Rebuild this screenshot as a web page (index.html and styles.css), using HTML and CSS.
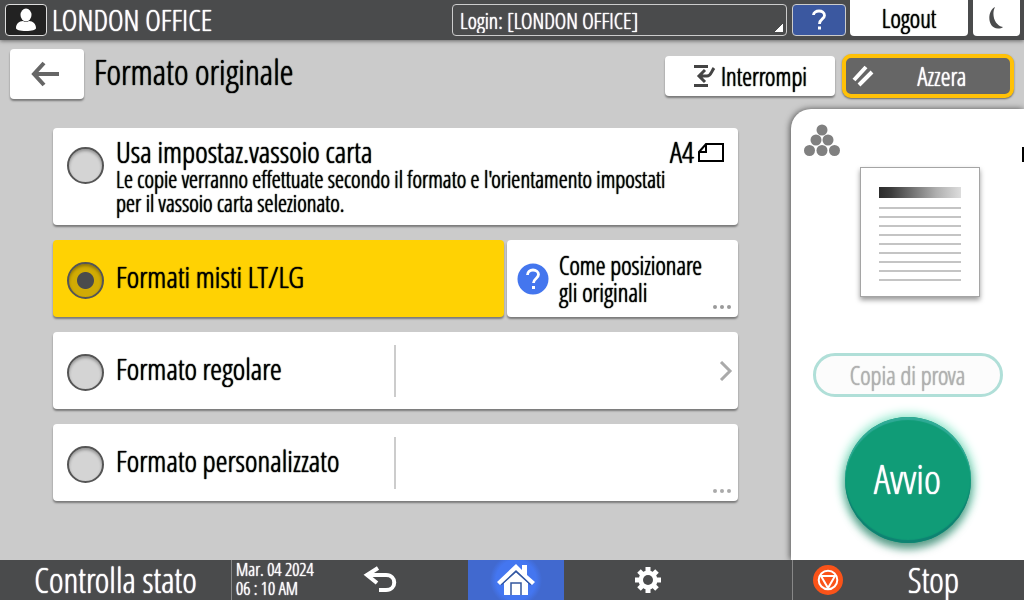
FILE: index.html
```html
<!DOCTYPE html>
<html lang="it">
<head>
    <meta charset="UTF-8">
    <meta name="viewport" content="width=device-width, initial-scale=1.0">
    <title>Formato originale</title>
    <link rel="stylesheet" href="styles.css">
</head>
<body>
    <header class="topbar">
        <div class="user">
            <span class="user-icon">
                <svg width="22" height="24" viewBox="0 0 22 24"><ellipse cx="11" cy="7" rx="5.500" ry="6.500" fill="#fff"/><path d="M1 20c0-4 3-7 7-7 2 1.300 4 1.300 6 0 4 0 7 3 7 7 0 2-4 3-10 3S1 22 1 20z" fill="#fff"/></svg>
            </span>
            <span class="user-name">LONDON OFFICE</span>
        </div>
        <select class="login" aria-label="Login">
            <option>Login: [LONDON OFFICE]</option>
        </select>
        <button class="help" aria-label="?">
            <svg width="16" height="22" viewBox="0 0 16 22"><path d="M2.500 6C2.500 3.500 5 2 8 2s5.500 1.500 5.500 4.500C13.500 10 8.500 10 8.500 15" fill="none" stroke="#fff" stroke-width="2.800"/><rect x="7" y="17.500" width="3" height="3" fill="#fff"/></svg>
        </button>
        <button class="logout">Logout</button>
        <button class="sleep" aria-label="Sleep">
            <svg width="18" height="24" viewBox="0 0 18 24"><path d="M7 1C-1 5-1 22 10 22.500c2 0 4-.5 5-1.500C7 20 3 9 7 1z" fill="#4a4b4c"/></svg>
        </button>
    </header>

    <div class="titlebar">
        <button class="back" aria-label="Indietro">
            <svg width="34" height="26" viewBox="0 0 34 26"><path d="M14 2L4 13l10 11M3 13h26" fill="none" stroke="#666" stroke-width="4"/></svg>
        </button>
        <h1>Formato originale</h1>
        <div class="actions">
            <button class="interrupt">
                <svg width="24" height="24" viewBox="0 0 24 24"><path d="M1 2.500h14M1 21.500h14M7 12h7c4 0 4-4 7-8M12 6l-6 6 6 6" fill="none" stroke="#444" stroke-width="3"/></svg>
                Interrompi
            </button>
            <button class="reset">
                <svg width="22" height="22" viewBox="0 0 22 22"><path d="M2 15L14 2M7 20L20 7" stroke="#fff" stroke-width="4"/></svg>
                <span>Azzera</span>
            </button>
        </div>
    </div>

    <div class="content">
        <main class="options">
            <label class="card card-tall">
                <input type="radio" name="format">
                <span class="text">
                    <span class="name">Usa impostaz.vassoio carta</span>
                    <span class="desc">Le copie verranno effettuate secondo il formato e l'orientamento impostati<br>per il vassoio carta selezionato.</span>
                </span>
                <span class="paper">A4
                    <svg width="26" height="19" viewBox="0 0 26 19"><path d="M8 1h17v17H1V9zM8 1v8H1" fill="none" stroke="#000" stroke-width="2"/></svg>
                </span>
            </label>
            <div class="split">
                <label class="card selected">
                    <input type="radio" name="format" checked>
                    <span class="name">Formati misti LT/LG</span>
                </label>
                <button class="card info">
                    <svg class="info-icon" width="32" height="32" viewBox="0 0 32 32"><circle cx="16" cy="16" r="15.500" fill="#4476ee"/><path d="M10.500 12c0-3 2.500-5 5.500-5s5.500 2 5.500 4.500c0 4-5 4-5 8.500" fill="none" stroke="#fff" stroke-width="2.800"/><rect x="15" y="23" width="3" height="3" fill="#fff"/></svg>
                    <span>Come posizionare<br>gli originali</span>
                    <svg class="more" width="18" height="4" viewBox="0 0 18 4" fill="#9a9a9a"><circle cx="2" cy="2" r="2"/><circle cx="9" cy="2" r="2"/><circle cx="16" cy="2" r="2"/></svg>
                </button>
            </div>
            <label class="card">
                <input type="radio" name="format">
                <span class="name name-col">Formato regolare</span>
                <svg class="chevron" width="14" height="20" viewBox="0 0 14 20"><path d="M2 1l9 9-9 9" fill="none" stroke="#aaa" stroke-width="3"/></svg>
            </label>
            <label class="card">
                <input type="radio" name="format">
                <span class="name name-col">Formato personalizzato</span>
                <svg class="more" width="18" height="4" viewBox="0 0 18 4" fill="#aaa"><circle cx="2" cy="2" r="2"/><circle cx="9" cy="2" r="2"/><circle cx="16" cy="2" r="2"/></svg>
            </label>
        </main>

        <aside class="panel">
            <div class="panel-top">
                <svg width="36" height="34" viewBox="0 0 36 34" fill="#808080"><circle cx="18" cy="6" r="5.500"/><circle cx="12" cy="16" r="5.500"/><circle cx="24" cy="16" r="5.500"/><circle cx="5.500" cy="26.500" r="5.500"/><circle cx="18" cy="26.500" r="5.500"/><circle cx="30.500" cy="26.500" r="5.500"/></svg>
                <span class="edge"></span>
            </div>
            <svg class="preview" width="120" height="130" viewBox="0 0 120 130">
                <defs>
                    <linearGradient id="ink"><stop offset="0" stop-color="#2c2c2c"/><stop offset="0.150" stop-color="#3c3c3c"/><stop offset="0.700" stop-color="#afafaf"/><stop offset="1" stop-color="#ddd"/></linearGradient>
                </defs>
                <rect x="0.500" y="0.500" width="119" height="129" fill="#fff" stroke="#a5a5a5"/>
                <rect x="19" y="20" width="82" height="11" fill="url(#ink)"/>
                <path d="M19 41h82M19 50h82M19 59h82M19 68h82M19 77h82M19 86h82M19 95h82M19 104h82M19 113h82" stroke="#c4c4c4" stroke-width="2"/>
            </svg>
            <button class="sample" disabled>Copia di prova</button>
            <button class="start">Avvio</button>
        </aside>
    </div>

    <footer class="bottombar">
        <button class="status">Controlla stato</button>
        <div class="date">Mar. 04 2024<br>06 : 10 AM</div>
        <button class="nav-back" aria-label="Indietro">
            <svg width="34" height="28" viewBox="0 0 34 28"><path d="M15 2L4 9l10 8M4 9h19c11 0 11 15 0 15h-7" fill="none" stroke="#fff" stroke-width="4"/></svg>
        </button>
        <button class="nav-home" aria-label="Home">
            <svg width="38" height="32" viewBox="0 0 38 32"><path d="M7 19L19 8l12 11v12H7z" fill="#fff"/><path d="M14 31V19h10v12" fill="none" stroke="#33579f" stroke-width="1.500"/><path d="M4 20.500L19 7l15 13.500" fill="none" stroke="#33579f" stroke-width="2"/><path d="M19 0l6 6V1h5v10l8 7-3 3L19 6 3 21l-3-3z" fill="#fff"/></svg>
        </button>
        <button class="nav-settings" aria-label="Impostazioni">
            <svg width="28" height="28" viewBox="0 0 28 28"><g stroke="#fff" stroke-width="5"><path d="M14 1v26M1 14h26M5 5l18 18M23 5L5 23"/></g><circle cx="14" cy="14" r="9.500" fill="#fff"/><circle cx="14" cy="14" r="5" fill="#4a4b4c"/></svg>
        </button>
        <button class="stop">
            <svg width="30" height="30" viewBox="0 0 30 30"><circle cx="15" cy="15" r="15" fill="#fa5319"/><circle cx="15" cy="15" r="9.300" fill="none" stroke="#fff" stroke-width="2"/><path d="M8 11h14l-7 12z" fill="none" stroke="#fff" stroke-width="2"/></svg>
            <span>Stop</span>
        </button>
    </footer>
</body>
</html>
```
FILE: styles.css
```css
* {
    box-sizing: border-box;
}
body {
    margin: 0;
    min-height: 100vh;
    display: flex;
    flex-direction: column;
    background: #cbcbcb;
    color: #000;
    font-family: "Open Sans Condensed Light", "Roboto Condensed", Lato, sans-serif;
    text-shadow: 0 0 1px, 0 0 1px;
    overflow: hidden;
}
button, select {
    border: none;
    padding: 0;
    margin: 0;
    background: none;
    color: inherit;
    font-family: inherit;
    text-shadow: inherit;
    cursor: pointer;
}
svg {
    display: block;
    flex: none;
}

/* top bar */
.topbar {
    display: flex;
    align-items: flex-start;
    height: 40px;
    padding: 0 4px 0 5px;
    background: #4a4b4c;
    color: #fff;
    box-shadow: 0 1px 4px rgba(0, 0, 0, 0.5);
}
.user {
    flex: 1;
    display: flex;
    align-items: center;
    gap: 5px;
    height: 40px;
}
.user-icon {
    display: flex;
    align-items: center;
    justify-content: center;
    width: 42px;
    height: 32px;
    background: #222;
    border: 1px solid #ddd;
    border-radius: 4px;
}
.user-name {
    font-size: 30px;
    line-height: 40px;
}
.login {
    appearance: none;
    width: 335px;
    height: 32px;
    margin: 4px 5px 0 0;
    padding: 0 7px 2px;
    border: 1px solid #ccc;
    border-radius: 4px;
    background: linear-gradient(135deg, transparent 50%, #fff 50%) no-repeat right 3px bottom 3px / 8px 8px;
    font-size: 22px;
}
.help {
    display: flex;
    align-items: center;
    justify-content: center;
    width: 54px;
    height: 32px;
    margin: 4px 4px 0 0;
    background: #3b58a0;
    border: 1px solid #ccc;
    border-radius: 4px;
}
.logout, .sleep {
    height: 36px;
    background: #fff;
    color: #000;
    border-radius: 0 0 4px 4px;
}
.logout {
    width: 118px;
    margin-right: 5px;
    font-size: 25px;
}
.sleep {
    display: flex;
    align-items: center;
    justify-content: center;
    width: 47px;
}

/* title row */
.titlebar {
    display: flex;
    align-items: flex-start;
    height: 69px;
    padding: 9px 10px 0;
}
.back, .interrupt, .card {
    background: #fff;
    border-radius: 4px;
    box-shadow: 0 2px 2px rgba(0, 0, 0, 0.4);
}
.back {
    display: flex;
    align-items: center;
    justify-content: center;
    width: 74px;
    height: 50px;
}
h1 {
    flex: 1;
    margin: 0 0 0 10px;
    font-size: 35px;
    line-height: 45px;
    font-weight: normal;
}
.actions {
    display: flex;
    align-items: center;
    gap: 7px;
    padding-top: 5px;
}
.interrupt {
    display: flex;
    align-items: center;
    justify-content: center;
    gap: 4px;
    width: 170px;
    height: 40px;
    font-size: 25px;
}
.reset {
    display: flex;
    align-items: center;
    width: 172px;
    height: 44px;
    padding: 0 6px;
    background: #666;
    color: #fff;
    border: 4px solid #ffc107;
    border-radius: 9px;
    box-shadow: 0 1px 2px rgba(0, 0, 0, 0.5);
    font-size: 25px;
}
.reset span {
    flex: 1;
    padding-left: 6px;
}

/* options list */
.content {
    flex: 1;
    display: grid;
    grid-template-columns: minmax(0, 1fr) 233px;
}
.options {
    display: flex;
    flex-direction: column;
    gap: 15px;
    padding: 19px 53px;
}
.card {
    position: relative;
    display: flex;
    align-items: center;
    gap: 12px;
    min-height: 77px;
    padding: 0 14px;
}
.card-tall {
    align-items: flex-start;
    min-height: 97px;
    padding-top: 9px;
}
.card-tall input {
    margin-top: 10px;
}
.card input {
    appearance: none;
    flex: none;
    width: 37px;
    height: 37px;
    margin-bottom: 0;
    margin-left: 0;
    margin-right: 0;
    border: 2px solid #555;
    border-radius: 50%;
    background: #d4d4d4;
    box-shadow: inset 0 2px 3px rgba(0, 0, 0, 0.3);
}
.card input:checked {
    background: radial-gradient(circle, #4a4b4c 8px, #d1ab04 9px);
}
.text {
    flex: 1;
    min-width: 0;
    display: flex;
    flex-direction: column;
}
.name {
    font-size: 30px;
    line-height: 30px;
}
.desc {
    font-size: 23px;
    line-height: 24px;
    white-space: nowrap;
}
.paper {
    display: flex;
    align-items: center;
    gap: 4px;
    font-size: 30px;
    line-height: 30px;
}
.split {
    display: grid;
    grid-template-columns: 451fr 231fr;
    gap: 3px;
}
.selected {
    background: #ffd203;
}
.selected .name {
    padding-bottom: 4px;
}
.info {
    padding: 0 10px;
    gap: 10px;
    font-size: 25px;
    line-height: 27px;
    text-align: left;
}
.name-col {
    width: 280px;
    padding: 9px 0 13px;
    border-right: 2px solid #ccc;
}
.more {
    position: absolute;
    right: 7px;
    bottom: 8px;
}
.chevron {
    margin-left: auto;
    margin-right: -9px;
}

/* right panel */
.panel {
    display: flex;
    flex-direction: column;
    align-items: center;
    background: #fff;
    border-top-left-radius: 20px;
    box-shadow: -1px 0 6px rgba(0, 0, 0, 0.6);
}
.panel-top {
    align-self: stretch;
    display: flex;
    align-items: center;
    justify-content: space-between;
    height: 58px;
    padding: 6px 0 0 13px;
}
.edge {
    width: 2px;
    height: 15px;
    margin-top: 26px;
    background: #000;
}
.preview {
    margin-left: 25px;
    box-shadow: 0 3px 5px rgba(0, 0, 0, 0.4);
}
.sample {
    width: 190px;
    height: 44px;
    margin-top: 56px;
    background: #fcfcfc;
    border: 3px solid #b0dfd8;
    border-radius: 22px;
    color: #b0b0b0;
    font-size: 25px;
}
.start {
    width: 126px;
    height: 126px;
    margin-top: 20px;
    padding-bottom: 4px;
    background: #109c77;
    border-radius: 50%;
    color: #fff;
    font-size: 41px;
    box-shadow: inset 0 3px 1px #31ab97, inset 0 -3px 1px #0e8272, 0 6px 8px rgba(0, 70, 50, 0.5), 0 0 10px 4px #a5efd8;
}

/* bottom bar */
.bottombar {
    display: grid;
    grid-template-columns: 231px 85px 1fr 96px 228px 232px;
    height: 40px;
    background: #4a4b4c;
    color: #fff;
}
.bottombar button {
    display: flex;
    align-items: center;
    justify-content: center;
}
.status, .stop {
    font-size: 35px;
    line-height: 38px;
}
.date {
    padding-left: 4px;
    border-left: 1px solid #888;
    font-size: 18px;
    line-height: 19px;
    white-space: nowrap;
}
.bottombar .nav-back {
    padding-right: 24px;
}
.nav-home {
    background: radial-gradient(circle, #4476f0 20px, #4169cf 26px);
}
.bottombar .nav-settings {
    padding-right: 60px;
}
.bottombar .stop {
    justify-content: flex-start;
    padding-left: 20px;
    border-left: 1px solid #888;
}
.stop span {
    flex: 1;
}
```
